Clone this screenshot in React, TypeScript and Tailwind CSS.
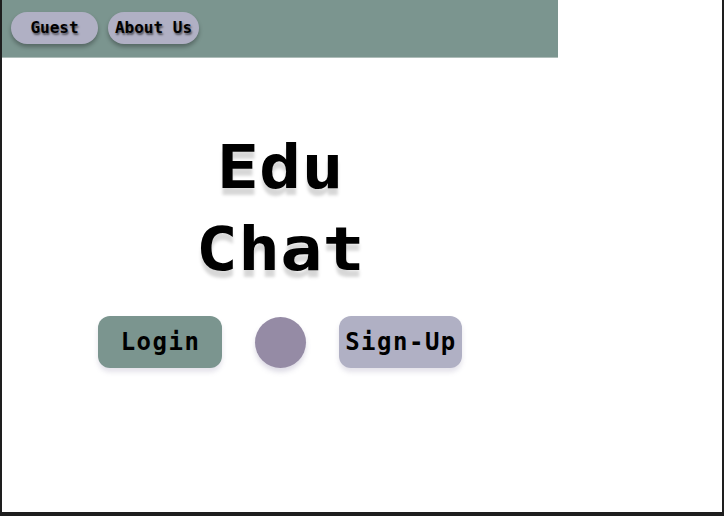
import React from "react";

const mono = "font-['DejaVu_Sans_Mono',monospace]";

export default function App() {
  return (
    <div className={`h-[516px] w-[724px] bg-white border-l-2 border-r-2 border-b-4 border-[#1e1e1e] ${mono}`}>
      {/* Top bar */}
      <div className="flex w-[556px] h-[58px] items-start gap-[10px] bg-[#7b958f] border-b border-[#aebdb9] pl-[9px] pt-[12px]">
        <button className="w-[87px] h-[32px] rounded-full bg-[#b0b0c4] text-[16px] font-bold text-black shadow-[0_3px_4px_rgba(0,0,0,0.3)] [text-shadow:1px_2px_2px_rgba(0,0,0,0.55)]">
          Guest
        </button>
        <button className="w-[91px] h-[32px] rounded-full bg-[#b0b0c4] text-[16px] font-bold text-black shadow-[0_3px_4px_rgba(0,0,0,0.3)] [text-shadow:1px_2px_2px_rgba(0,0,0,0.55)]">
          About Us
        </button>
      </div>

      {/* Hero */}
      <div className="w-[556px] flex flex-col items-center">
        <h1 className="mt-[68px] scale-x-[1.17] text-center text-[60px] leading-[82px] font-bold text-black [text-shadow:0_7px_3px_rgba(0,0,0,0.16)]">
          Edu
          <br />
          Chat
        </h1>

        <div className="mt-[26px] flex items-center gap-[33px]">
          <button className="w-[124px] h-[52px] rounded-xl bg-[#7b958f] pl-[1px] text-[24px] font-bold tracking-[1.5px] text-black shadow-[0_4px_5px_rgba(120,110,150,0.2)]">
            Login
          </button>
          <div className="w-[51px] h-[51px] rounded-full bg-[#958ba5] shadow-[0_4px_5px_rgba(120,110,150,0.25)]" />
          <button className="w-[123px] h-[52px] rounded-xl bg-[#b0b0c4] pl-[1px] text-[24px] font-bold tracking-[1.5px] text-black shadow-[0_4px_5px_rgba(120,110,150,0.2)]">
            Sign-Up
          </button>
        </div>
      </div>
    </div>
  );
}
